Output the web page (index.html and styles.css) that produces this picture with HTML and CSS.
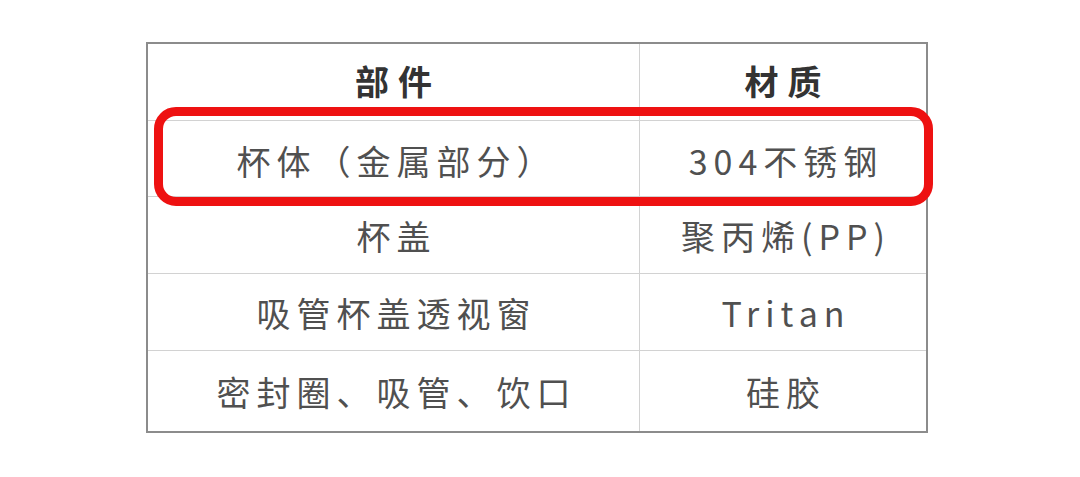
FILE: index.html
```html
<!DOCTYPE html>
<html lang="zh-CN">
<head>
<meta charset="utf-8">
<title>材质表</title>
<link rel="stylesheet" href="styles.css">
</head>
<body>
<div class="page">
  <div class="table-wrap">
    <div class="table">
      <div class="cell head">部件</div>
      <div class="cell head col2">材质</div>
      <div class="cell r1">杯体（金属部分）</div>
      <div class="cell col2 r1">304不锈钢</div>
      <div class="cell">杯盖</div>
      <div class="cell col2">聚丙烯(PP)</div>
      <div class="cell">吸管杯盖透视窗</div>
      <div class="cell col2">Tritan</div>
      <div class="cell last">密封圈、吸管、饮口</div>
      <div class="cell col2 last">硅胶</div>
    </div>
    <div class="highlight"></div>
  </div>
</div>
</body>
</html>
```
FILE: styles.css
```css
html, body {
  margin: 0;
  padding: 0;
  background: #ffffff;
}
.page {
  width: 1080px;
  height: 477px;
  padding: 42px 0 0 146px;
  box-sizing: border-box;
  font-family: "Noto Sans CJK SC", "Noto Sans", sans-serif;
}
.table-wrap {
  position: relative;
  width: 782px;
}
.table {
  display: grid;
  grid-template-columns: 491px 1fr;
  grid-template-rows: 77px 76px 77px 77px 80px;
  border: 2px solid #8c8c8c;
  box-sizing: border-box;
  width: 782px;
}
.cell {
  display: flex;
  align-items: center;
  justify-content: center;
  font-size: 34px;
  letter-spacing: 6px;
  color: #505050;
  border-bottom: 1px solid #d2d2d2;
  padding-left: 6px;
}
.cell.r1 {
  padding-top: 4px;
}
.cell.col2 {
  border-left: 1px solid #d2d2d2;
}
.cell.last {
  border-bottom: none;
}
.cell.head {
  font-weight: bold;
  color: #333333;
  letter-spacing: 9px;
  padding-bottom: 4px;
  padding-left: 9px;
}
.highlight {
  position: absolute;
  left: 8px;
  top: 65px;
  width: 779px;
  height: 99px;
  box-sizing: border-box;
  border: 9px solid #ee1111;
  border-radius: 22px;
}
```
